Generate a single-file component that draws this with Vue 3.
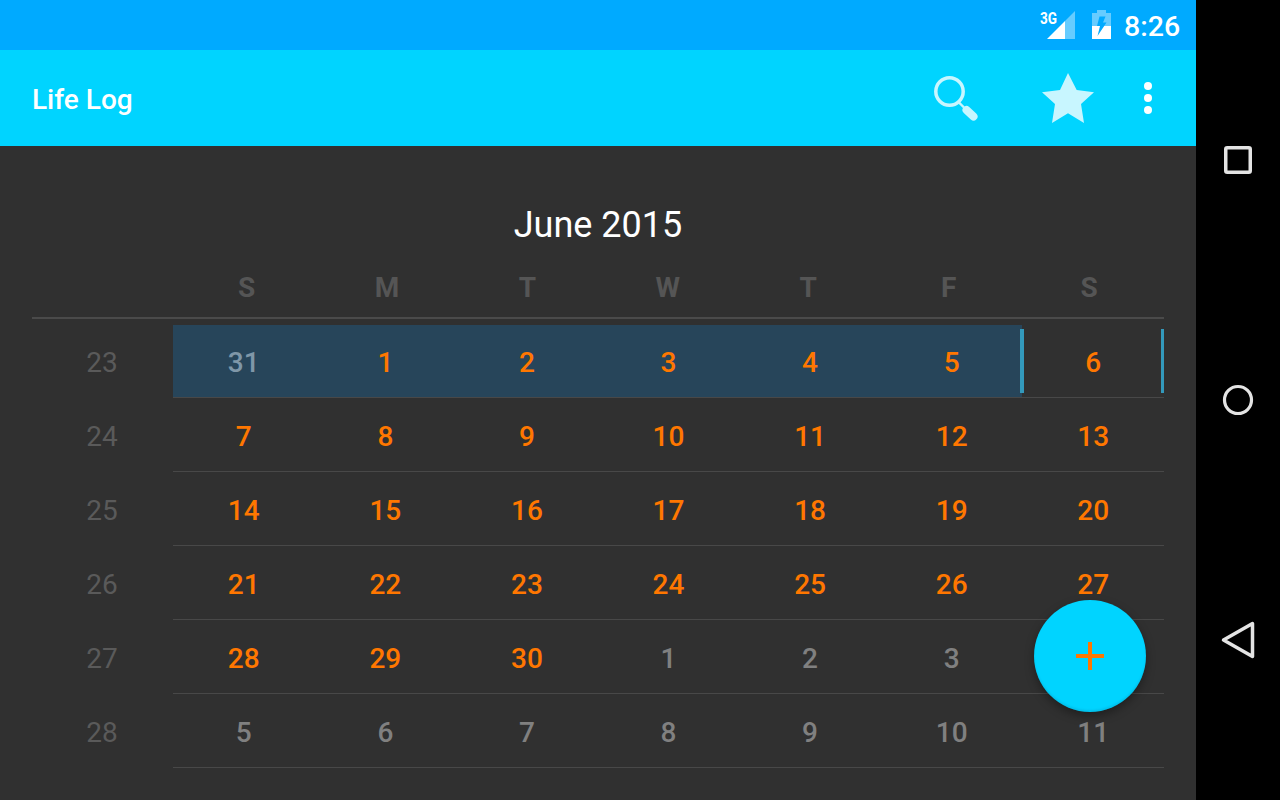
<script setup>
const headers = ['S', 'M', 'T', 'W', 'T', 'F', 'S']
const weeks = [
  { n: 23, days: [[31, 0, 1], [1, 1, 1], [2, 1, 1], [3, 1, 1], [4, 1, 1], [5, 1, 1], [6, 1, 0]] },
  { n: 24, days: [7, 8, 9, 10, 11, 12, 13].map((d) => [d, 1, 0]) },
  { n: 25, days: [14, 15, 16, 17, 18, 19, 20].map((d) => [d, 1, 0]) },
  { n: 26, days: [21, 22, 23, 24, 25, 26, 27].map((d) => [d, 1, 0]) },
  { n: 27, days: [[28, 1, 0], [29, 1, 0], [30, 1, 0], [1, 0, 0], [2, 0, 0], [3, 0, 0], [4, 0, 0]] },
  { n: 28, days: [5, 6, 7, 8, 9, 10, 11].map((d) => [d, 0, 0]) },
]
</script>

<template>
  <div class="device">
    <div class="screen">
      <div class="status">
        <span class="net">3G</span>
        <svg class="signal" width="28" height="28" viewBox="0 0 28 28">
          <path d="M0 28 L18 10 V28 Z" fill="#fff" />
          <path d="M18 10 L28 0 V28 H18 Z" fill="#66ccff" />
        </svg>
        <svg class="battery" width="19" height="29" viewBox="0 0 19 29">
          <path d="M5 0 H14 V3 H19 V29 H0 V3 H5 Z" fill="#66ccff" />
          <path d="M0 16 H19 V29 H0 Z" fill="#fff" />
          <path d="M7.500 6.500 H13.500 L11 12.500 H14.500 L5.500 26 L8 16 H5 Z" fill="#00aaff" />
        </svg>
        <span class="clock">8:26</span>
      </div>
      <header class="appbar">
        <span class="title">Life Log</span>
        <svg class="search" width="46" height="46" viewBox="0 0 46 46">
          <circle cx="15.500" cy="15.500" r="13.700" fill="none" stroke="#c8f6ff" stroke-width="3.500" />
          <path d="M24.500 26 L30 31.500" stroke="#c8f6ff" stroke-width="2.400" />
          <path d="M32.500 34 L39.500 40.500" stroke="#c8f6ff" stroke-width="8" stroke-linecap="round" />
        </svg>
        <svg class="star" width="54" height="50" viewBox="0 0 54 50">
          <path d="M26 0 L34.700 17 L52 19.300 L39 31 L42 50 L26 40.300 L10 50 L13 31 L0 19.300 L18 17 Z" fill="#c8f6ff" />
        </svg>
        <div class="more"><i></i><i></i><i></i></div>
      </header>
      <main class="content">
        <h1 class="month">June 2015</h1>
        <div class="heads">
          <span class="corner"></span>
          <span v-for="(h, i) in headers" :key="i" class="head">{{ h }}</span>
        </div>
        <div v-for="(w, wi) in weeks" :key="w.n" class="week">
          <span class="num">{{ w.n }}</span>
          <div class="days">
            <span
              v-for="(d, i) in w.days"
              :key="i"
              class="day"
              :class="{ on: d[1], off: !d[1], sel: d[2], marked: wi === 0 && i === 6 }"
            >{{ d[0] }}</span>
          </div>
        </div>
        <button class="fab">
          <svg width="28" height="28" viewBox="0 0 28 28">
            <path d="M14 0 V28 M0 14 H28" stroke="#ff7700" stroke-width="4" />
          </svg>
        </button>
      </main>
    </div>
    <nav class="nav">
      <svg width="30" height="30" viewBox="0 0 30 30">
        <rect x="2.750" y="2.750" width="24.500" height="24.500" rx="1.500" fill="none" stroke="#e4e4e4" stroke-width="3.500" />
      </svg>
      <svg class="home" width="32" height="32" viewBox="0 0 32 32">
        <circle cx="16" cy="16" r="13.500" fill="none" stroke="#e4e4e4" stroke-width="3.200" />
      </svg>
      <svg width="34" height="38" viewBox="0 0 34 38">
        <path d="M31.500 2.500 V35.500 L2.500 19 Z" fill="none" stroke="#e4e4e4" stroke-width="3.500" stroke-linejoin="round" />
      </svg>
    </nav>
  </div>
</template>

<style scoped>
.device {
  width: 1280px;
  height: 800px;
  display: flex;
  overflow: hidden;
  font-family: Roboto, sans-serif;
}
.screen {
  width: 1196px;
  display: flex;
  flex-direction: column;
  background: #303030;
}
.status {
  height: 50px;
  background: #00aaff;
  display: flex;
  align-items: center;
  justify-content: flex-end;
  padding-right: 16px;
  position: relative;
}
.net {
  position: absolute;
  left: 1040px;
  top: 11px;
  font-size: 16px;
  line-height: 16px;
  font-weight: 700;
  color: #fff;
  transform: scaleX(0.85);
  transform-origin: left;
}
.signal { margin-right: 17px; }
.battery { margin-right: 13px; margin-top: -1px; }
.clock {
  width: 56px;
  text-align: right;
  font-size: 28.500px;
  font-weight: 500;
  line-height: 40px;
  margin-top: 4px;
  color: #fff;
}
.appbar {
  height: 96px;
  background: #00d4ff;
  display: flex;
  align-items: center;
  position: relative;
  z-index: 1;
}
.title {
  margin-left: 32px;
  font-size: 28px;
  line-height: 34px;
  padding-top: 4px;
  font-weight: 500;
  color: #fff;
  flex: 1;
}
.search { margin-right: 62px; margin-top: 2px; }
.star { margin-right: 47px; }
.more {
  width: 10px;
  margin-right: 43px;
  display: flex;
  flex-direction: column;
  gap: 4px;
}
.more i {
  width: 8px;
  height: 8px;
  border-radius: 50%;
  background: #fff;
  margin: 0 1px;
}
.content {
  flex: 1;
  padding: 0 32px;
  position: relative;
}
.month {
  margin: 56px 0 0;
  font-size: 36px;
  line-height: 46px;
  font-weight: 400;
  color: #fff;
  text-align: center;
}
.heads {
  display: grid;
  grid-template-columns: 144.500px repeat(7, 140.400px);
  height: 71px;
  margin-bottom: 5px;
  padding-top: 25px;
  box-sizing: border-box;
  border-bottom: 2px solid #4a4a4a;
  font-size: 28px;
  line-height: 30px;
  font-weight: 700;
  color: #555;
  text-align: center;
}
.week {
  display: grid;
  grid-template-columns: 141px 1fr;
  height: 74px;
}
.num {
  font-size: 28px;
  line-height: 77px;
  height: 73px;
  padding-right: 1px;
  color: #5a5a5a;
  text-align: center;
}
.days {
  display: grid;
  grid-template-columns: repeat(7, 1fr);
  grid-template-rows: 73px;
  height: 74px;
  box-sizing: border-box;
  border-bottom: 1px solid #484848;
}
.day {
  font-size: 28px;
  line-height: 77px;
  height: 73px;
  font-weight: 500;
  text-align: center;
  position: relative;
}
.on { color: #ff7700; }
.off { color: #808080; }
.sel { background: linear-gradient(#303030 1px, #27455a 1px); }
.sel.off { color: #7f97a8; }
.marked::before,
.marked::after {
  content: '';
  position: absolute;
  top: 5px;
  bottom: 4px;
  background: #3399bb;
}
.marked::before { left: -2.400px; width: 4px; }
.marked::after { right: 0; width: 3px; }
.fab {
  position: absolute;
  left: 1034px;
  top: 454px;
  width: 112px;
  height: 112px;
  border: 0;
  border-radius: 50%;
  background: #00d4ff;
  display: flex;
  align-items: center;
  justify-content: center;
  padding: 0;
  box-shadow: 0 4px 10px rgba(0, 0, 0, 0.35), inset 0 -2px 2px rgba(0, 90, 130, 0.15);
}
.nav {
  width: 84px;
  background: #000;
  position: relative;
  display: flex;
  flex-direction: column;
  align-items: center;
  justify-content: space-between;
  padding: 145px 0 141px;
  box-sizing: border-box;
}
.home { margin-top: 4px; }
</style>
